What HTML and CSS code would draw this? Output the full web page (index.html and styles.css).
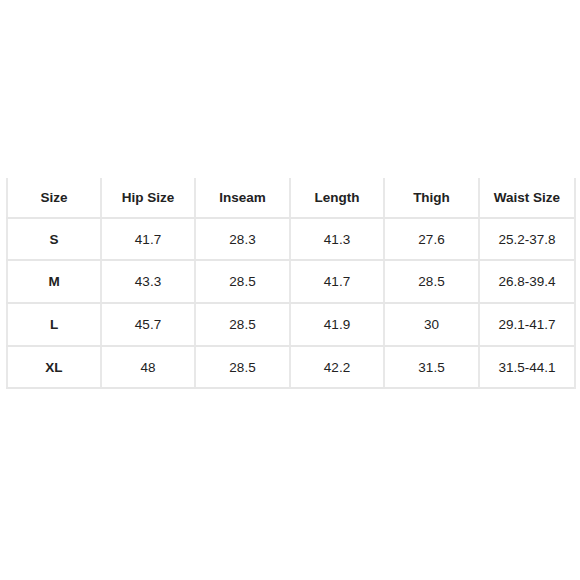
FILE: index.html
```html
<!DOCTYPE html>
<html>
<head>
<meta charset="utf-8">
<link rel="stylesheet" href="styles.css">
</head>
<body>
<div class="chart">
  <div class="row head">
    <div class="cell">Size</div><div class="cell">Hip Size</div><div class="cell">Inseam</div><div class="cell">Length</div><div class="cell">Thigh</div><div class="cell">Waist Size</div>
  </div>
  <div class="row r1">
    <div class="cell b">S</div><div class="cell">41.7</div><div class="cell">28.3</div><div class="cell">41.3</div><div class="cell">27.6</div><div class="cell">25.2-37.8</div>
  </div>
  <div class="row r2">
    <div class="cell b">M</div><div class="cell">43.3</div><div class="cell">28.5</div><div class="cell">41.7</div><div class="cell">28.5</div><div class="cell">26.8-39.4</div>
  </div>
  <div class="row r3">
    <div class="cell b">L</div><div class="cell">45.7</div><div class="cell">28.5</div><div class="cell">41.9</div><div class="cell">30</div><div class="cell">29.1-41.7</div>
  </div>
  <div class="row r4">
    <div class="cell b">XL</div><div class="cell">48</div><div class="cell">28.5</div><div class="cell">42.2</div><div class="cell">31.5</div><div class="cell">31.5-44.1</div>
  </div>
</div>
</body>
</html>
```
FILE: styles.css
```css
html, body {
  margin: 0;
  padding: 0;
  background: #ffffff;
}
body {
  width: 580px;
  height: 580px;
  font-family: "Liberation Sans", Arial, sans-serif;
  color: #222222;
}
.chart {
  margin: 178px 0 0 6px;
  width: 570px;
  border-right: 2px solid #e8e8e8;
  box-sizing: border-box;
}
.row {
  display: grid;
  grid-template-columns: 94px 94px 95px 94px 95px 96px;
  border-bottom: 2px solid #e6e6e6;
  height: 42px;
  box-sizing: border-box;
}
.row.head { height: 41px; }
.row.r1 { height: 42px; }
.row.r2 { height: 43px; }
.row.r3 { height: 43px; }
.row.r4 { height: 42px; }
.cell {
  border-left: 2px solid #e8e8e8;
  display: flex;
  align-items: center;
  justify-content: center;
  font-size: 13.5px;
}
.head .cell, .cell.b {
  font-weight: bold;
}
```
